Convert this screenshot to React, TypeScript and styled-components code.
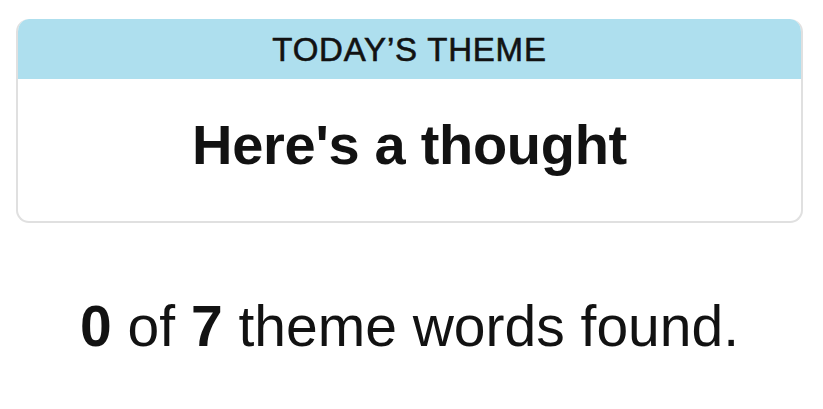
import React from "react";
import styled, { createGlobalStyle } from "styled-components";

const Global = createGlobalStyle`
  html, body {
    margin: 0;
    padding: 0;
    background: #ffffff;
  }
  body {
    font-family: "Liberation Sans", Arial, sans-serif;
    color: #121212;
  }
`;

const Page = styled.main`
  display: flex;
  flex-direction: column;
  align-items: stretch;
  padding: 19px 20px 0 16px;
`;

const Card = styled.section`
  display: flex;
  flex-direction: column;
  border: 2px solid #e0e0e0;
  border-top: none;
  border-radius: 13px;
  overflow: hidden;
  background: #ffffff;
`;

const CardHeader = styled.header`
  display: flex;
  align-items: center;
  justify-content: center;
  height: 60px;
  margin: 0 -2px;
  background: #aedfee;
  border-radius: 13px 13px 0 0;
`;

const HeaderLabel = styled.h2`
  margin: 0;
  font-family: "Liberation Sans", Arial, sans-serif;
  font-weight: 400;
  font-size: 33px;
  line-height: 33px;
  letter-spacing: 0.8px;
  -webkit-text-stroke: 0.6px #121212;
  color: #121212;
  text-transform: uppercase;
`;

const CardBody = styled.div`
  display: flex;
  justify-content: center;
  padding: 38px 0 48px;
`;

const ThemeTitle = styled.h1`
  margin: 0;
  font-family: "Liberation Sans", Arial, sans-serif;
  font-weight: 700;
  font-size: 56px;
  line-height: 56px;
  letter-spacing: -0.3px;
  color: #121212;
`;

const Progress = styled.p`
  margin: 75px 0 0;
  text-align: center;
  font-family: "Liberation Sans", Arial, sans-serif;
  font-weight: 400;
  font-size: 57px;
  line-height: 57px;
  color: #121212;
`;

const Count = styled.strong`
  font-weight: 700;
`;

export default function App() {
  return (
    <>
      <Global />
      <Page>
        <Card>
          <CardHeader>
            <HeaderLabel>Today’s Theme</HeaderLabel>
          </CardHeader>
          <CardBody>
            <ThemeTitle>Here's a thought</ThemeTitle>
          </CardBody>
        </Card>
        <Progress>
          <Count>0</Count> of <Count>7</Count> theme words found.
        </Progress>
      </Page>
    </>
  );
}
